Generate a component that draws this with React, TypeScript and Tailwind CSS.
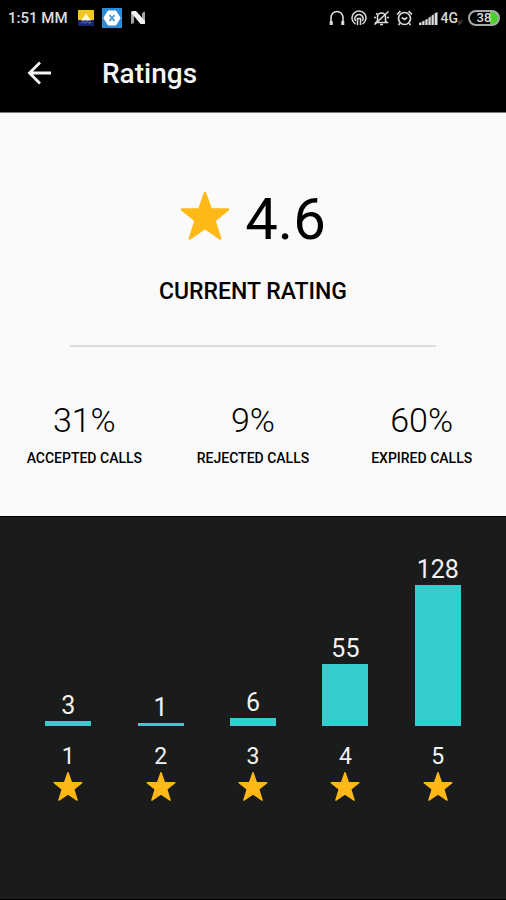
import { clsx } from "clsx";

const stats = [
  { label: "Accepted calls", value: "31%" },
  { label: "Rejected calls", value: "9%" },
  { label: "Expired calls", value: "60%" },
];

const ratings = [
  { stars: 1, count: 3 },
  { stars: 2, count: 1 },
  { stars: 3, count: 6 },
  { stars: 4, count: 55 },
  { stars: 5, count: 128 },
];

const barHeight = (count: number) => Math.round(count * 1.09 + 1.7);

function Star({ className }: { className?: string }) {
  return (
    <svg viewBox="0 0 50 50" className={clsx("shrink-0 text-[#ffb917]", className)} aria-hidden="true">
      <path
        d="M25 3 30.8 19.500H48L34.500 30.500 40.200 48.500 25 38 9.800 48.500 15.500 30.500 2 19.500H19.200Z"
        fill="currentColor"
        stroke="currentColor"
        strokeWidth="2.400"
        strokeLinejoin="round"
      />
    </svg>
  );
}

function StatusBar() {
  return (
    <div className="flex h-9 items-center justify-between pl-2 pr-[6px] text-[#dcdcdc]">
      <div className="flex items-center">
        <span className="w-[70px] whitespace-nowrap text-[15px] font-medium leading-5">1:51 MM</span>
        <svg width="16" height="16" viewBox="0 0 16 16" className="mr-2" aria-hidden="true">
          <path d="M0 0h16v10H0z" fill="#f3c918" />
          <path d="M0 10h16v6H0z" fill="#17246e" />
          <path d="M8 3.5 13 10.5H3Z" fill="#fff6d8" />
          <path d="M3 13.5 5 11.5 7 13.5 9 11.5 11 13.5 13 12" fill="none" stroke="#7381c4" strokeWidth="1" />
        </svg>
        <svg width="20" height="20" viewBox="0 0 20 20" className="mr-2" aria-hidden="true">
          <path d="M0 0h20v20H0z" fill="#2b8bd8" />
          <path d="M6.5 3.5h7L17.5 10l-4 6.5h-7L2.500 10Z" fill="#fff" stroke="#fff" strokeWidth="2" strokeLinejoin="round" />
          <path d="m7.500 7 5 6m0-6-5 6" stroke="#4a93d5" strokeWidth="1.800" />
        </svg>
        <svg width="16" height="14" viewBox="0 0 16 14" aria-hidden="true">
          <path d="M1 13V1.500L4 0v12ZM12 13V2l3-1.500V12Z" fill="#a5a5a5" />
          <path d="M1 1.500Q1 0 3 0H6L15 10V13H10.500Z" fill="#f2f2f2" />
        </svg>
      </div>

      <div className="flex items-center">
        <svg width="16" height="16" viewBox="0 0 16 16" fill="none" stroke="currentColor" className="mr-[6px]" aria-hidden="true">
          <path d="M2 13V7.500a6 6 0 0 1 12 0V13" strokeWidth="1.600" />
          <path d="M2.200 11v4M13.800 11v4" strokeWidth="3" />
        </svg>
        <svg width="16" height="16" viewBox="0 0 16 16" fill="none" stroke="currentColor" strokeWidth="1.500" className="mr-[6px]" aria-hidden="true">
          <path d="M4.500 14a7 7 0 1 1 7 0" />
          <path d="M4.800 11a4 4 0 1 1 6.400 0" />
          <path d="M6.500 15V8.500h3V15" />
        </svg>
        <svg width="17" height="16" viewBox="0 0 17 16" fill="none" stroke="currentColor" strokeWidth="1.600" className="mr-[6px]" aria-hidden="true">
          <path d="M4.500 11V7a4 4 0 0 1 8 0v4l1.500 1.500H3Z" />
          <path d="M1.500 14.500 15.500 1.500M7 14.500h3M1 7.500h2M14 7.500h2M3 3.500l1.500 1" />
        </svg>
        <svg width="17" height="16" viewBox="0 0 17 16" fill="none" stroke="currentColor" strokeWidth="1.700" className="mr-[6px]" aria-hidden="true">
          <circle cx="8.500" cy="8.500" r="6" />
          <path d="M1 4.500 4.500 1.200M16 4.500l-3.500-3.300M3.800 13.200 2.500 15M13.200 13.200l1.300 1.800M5.800 7.500l2.700 2 2.700-2" />
        </svg>
        <svg width="19" height="13" viewBox="0 0 19 13" fill="currentColor" className="mr-[3px]" aria-hidden="true">
          <path d="M0 13v-2l2.500-1v3ZM3.200 13V9.500l2.300-1V13ZM6.300 13V7.800l2.300-1V13ZM9.400 13V5.800l2.300-1.200V13ZM12.500 13V3.800l2.300-1.500V13ZM15.600 13V1.600L18.500 0v13Z" />
        </svg>
        <span className="text-sm font-medium leading-5">4G</span>
        <svg width="6" height="5" viewBox="0 0 6 5" className="mr-1 mt-2" aria-hidden="true">
          <path d="M1 5V1h4M1 3h3" fill="none" stroke="#555" />
        </svg>
        <span className="flex h-4 w-8 items-center justify-center rounded-full border-2 border-[#a9a9a9] bg-linear-to-r from-black from-70% to-[#4bd22f] to-70% text-[13px] font-medium leading-3">
          38
        </span>
      </div>
    </div>
  );
}

export default function App() {
  return (
    <div className="flex min-h-screen flex-col bg-black font-['Roboto',sans-serif]">
      <StatusBar />

      <header className="flex h-[76px] items-center pl-[26px] text-[#f5f5f5]">
        <button type="button" aria-label="Back" className="mr-[50px]">
          <svg width="26" height="26" viewBox="0 0 26 26" fill="none" stroke="currentColor" strokeWidth="2.800" aria-hidden="true">
            <path d="M25 12H3.500M14 1.500 3.500 12 14 22.500" />
          </svg>
        </button>
        <h1 className="text-[28px] font-medium leading-8">Ratings</h1>
      </header>

      <main className="flex flex-1 flex-col">
        <section className="border-t border-[#777] bg-[#fafafa] pb-12 pt-[77px] text-black">
          <div className="flex items-start justify-center gap-[15px]">
            <Star className="size-[50px]" />
            <span className="text-[58px] leading-[58px]">4.6</span>
          </div>
          <h2 className="mt-[30px] text-center text-[23px] font-medium uppercase leading-7">Current rating</h2>
          <hr className="mx-[70px] mt-[39px] border-t-2 border-[#dcdcdc]" />

          <dl className="mt-[53px] grid grid-cols-3 text-center">
            {stats.map((stat) => (
              <div key={stat.label} className="flex flex-col-reverse">
                <dt className="mt-2 text-[14px] font-medium uppercase leading-5">{stat.label}</dt>
                <dd className="text-[34px] font-light leading-10">{stat.value}</dd>
              </div>
            ))}
          </dl>
        </section>

        <section className="flex-1 border-y border-black bg-[#1a1c1b] px-[22px] pt-[38px] text-[#f2f2f2]">
          <ul className="grid grid-cols-5 items-end">
            {ratings.map((rating) => (
              <li key={rating.stars} className="flex flex-col items-center">
                <span className="text-[25px] leading-[30px]">{rating.count}</span>
                <div className="w-[46px] bg-[#35cdce]" style={{ height: barHeight(rating.count) }} />
                <span className="mt-[17px] text-[23px] leading-7">{rating.stars}</span>
                <Star className="size-[30px]" />
              </li>
            ))}
          </ul>
        </section>
      </main>
    </div>
  );
}
